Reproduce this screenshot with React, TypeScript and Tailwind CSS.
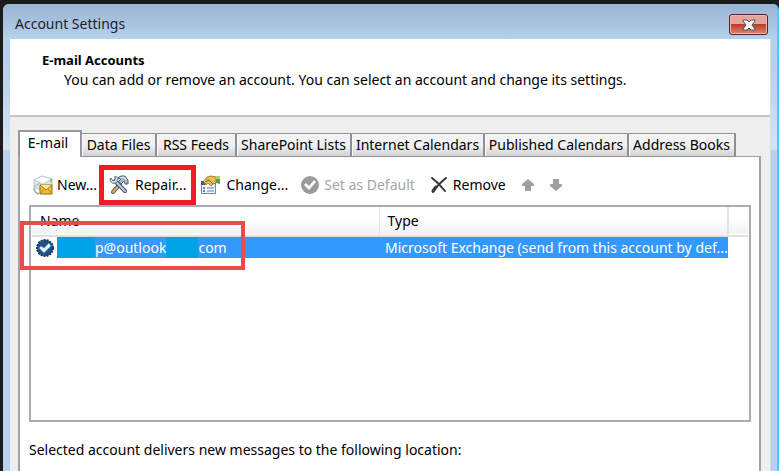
import React, { useState } from 'react';

const tabs = [
  { label: 'Data Files', width: 'w-[75px]' },
  { label: 'RSS Feeds', width: 'w-20' },
  { label: 'SharePoint Lists', width: 'w-[115px]' },
  { label: 'Internet Calendars', width: 'w-[133px]' },
  { label: 'Published Calendars', width: 'w-36' },
  { label: 'Address Books', width: 'w-[107px]' },
];

const NewIcon = () => (
  <svg className="h-5 w-5 shrink-0" viewBox="0 0 20 20">
    <path d="M1 5 9 1l10 3v7l-9 5-9-4z" fill="#dfe4e9" stroke="#b9c1c9" />
    <path d="m1 5 9 4 9-5-10-3z" fill="#fbfcfd" stroke="#b9c1c9" strokeWidth=".8" />
    <path d="m1 12 6-4" stroke="#a9b4be" />
    <path d="M1 13c0 4 2 5 5 6" stroke="#9cb5cd" strokeWidth="2" fill="none" />
    <path d="M17 4h2v3h-2z" fill="#4fe04f" />
    <path d="M7 10h12v9H7z" fill="#edc038" stroke="#8d6a1a" />
    <path d="m7 10 6 5 6-5" fill="#ffe991" stroke="#a67b17" />
    <path d="m7 19 4-5m8 5-4-5" stroke="#b88c22" />
  </svg>
);

const RepairIcon = () => (
  <svg className="h-5 w-5 shrink-0" viewBox="0 0 20 20">
    <path d="m11 9-7 8" stroke="#5f4632" strokeWidth="4" strokeLinecap="round" />
    <path d="m11 9-7 8" stroke="#dcb27c" strokeWidth="2" strokeLinecap="round" />
    <path d="m6 6 10 10" stroke="#3f5268" strokeWidth="4" strokeLinecap="round" />
    <path d="m6 6 10 10" stroke="#bfcedc" strokeWidth="2" strokeLinecap="round" />
    <path d="M1 4c0 4 4 6 7 3 2-2 1-5-2-6v4L4 6 2 3z" fill="#c9d5e1" stroke="#5a6f86" />
    <path d="m9 3 3-2h4l2 3 1 1v4h-3l-1-3-3 3-3-2 3-3z" fill="#a5b6c8" stroke="#4c6078" />
    <path d="m11 3 4-1 2 3" stroke="#e7eef5" fill="none" />
  </svg>
);

const ChangeIcon = () => (
  <svg className="h-5 w-5 shrink-0" viewBox="0 0 20 20">
    <path d="M1.5 6.500h14v12h-14z" fill="#f1f6fc" stroke="#7088a8" />
    <path d="M1 6h4v4H1z" fill="#315c91" />
    <path d="M3 13h2M3 16h2" stroke="#315c91" strokeWidth="1.500" />
    <path d="M7 13h7M7 16h7" stroke="#8fabd0" strokeWidth="1.500" />
    <path d="m3 7 4-5 4-1 5 1v6l-3 1-2 2-3-3-2 2-1-2z" fill="#e8bd55" stroke="#99701f" strokeWidth=".8" />
    <path d="m7 5 3 1 3 3M5 7l4-2" stroke="#8d641b" fill="none" />
    <path d="M16 1h4v8l-4-1z" fill="#5d9b52" />
    <path d="M16 1h4v3h-4z" fill="#b8cf55" />
  </svg>
);

const DefaultIcon = () => (
  <svg className="h-5 w-5 shrink-0" viewBox="0 0 20 20">
    <circle cx="10" cy="10" r="9" fill="#9b9b9b" />
    <path d="m4 10 5 5 7-8-2-2-5 6-3-3z" fill="#fff" />
  </svg>
);

const AccountIcon = () => (
  <svg className="h-5 w-5 shrink-0" viewBox="0 0 20 20">
    <circle cx="10" cy="10" r="8" fill="#1f5288" />
    <circle cx="10" cy="10" r="8" fill="none" stroke="#143a66" strokeWidth="2" strokeDasharray="2 1" />
    <path d="m4 10 5 5 7-7-2-3-5 5-3-2z" fill="#e9f3fd" stroke="#4f8fd0" strokeWidth=".8" />
  </svg>
);

const RemoveIcon = () => (
  <svg className="h-4 w-4 shrink-0" viewBox="0 0 16 16" fill="none" stroke="#333538" strokeLinecap="round">
    <path d="M1 1c4 3 9 8 13 13" strokeWidth="2" />
    <path d="M15 1C10 5 5 10 2 15" strokeWidth="2" />
    <path d="m2 14 3-4" strokeWidth="3" />
  </svg>
);

const ArrowIcon = ({ down }: { down?: boolean }) => (
  <svg className={down ? 'h-3 w-3 rotate-180' : 'h-3 w-3'} viewBox="0 0 12 12">
    <path d="M6 0 12 5v2H9v5H3V7H0V5z" fill="#a0a0a0" />
  </svg>
);

export default function App() {
  const [active, setActive] = useState('E-mail');

  return (
    <div className="flex min-h-screen flex-col bg-[#1c1c1c] pl-[3px] pt-1 font-['Noto_Sans',sans-serif] text-sm leading-5 text-black">
      <div className="flex flex-1 flex-col rounded-t-md border-r-2 border-[#3fd0f5] bg-[#b9d1ea] bg-[linear-gradient(to_bottom,#99b4d1_0px,#b7d0eb_35px,#b9d1ea_70px,#d6e4f3_145px,#b9d1ea_147px)]">
        <header className="flex h-[35px] shrink-0 items-start justify-between pl-3 pr-[9px] pt-[10px]">
          <h1 className="text-[#1a2330]">Account Settings</h1>
          <button
            aria-label="Close"
            className="flex h-[21px] w-[39px] items-center justify-center rounded-[3px] border border-[#5b1f2b] bg-linear-to-b from-[#e5a59b] from-45% via-[#b83c25] via-50% to-[#d88773] shadow-[inset_0_0_0_1px_#efb9ae]"
          >
            <svg className="h-3 w-4" viewBox="0 0 16 12">
              <path d="M2 1h4l2 2 2-2h4v1l-3 4 3 4v1h-4L8 9l-2 2H2v-1l3-4-3-4z" fill="#f5f5f5" stroke="#505663" />
            </svg>
          </button>
        </header>

        <main className="ml-[7px] mr-1.5 flex flex-1 flex-col border-r border-[#cfdff0] bg-[#efefef]">
          <section className="h-[78px] border-b-2 border-[#c4c4c4] bg-white pl-8 pt-[11px]">
            <h2 className="text-[13px] font-bold leading-5">E-mail Accounts</h2>
            <p className="whitespace-nowrap pl-[22px]">
              You can add or remove an account. You can select an account and change its settings.
            </p>
          </section>

          <div className="flex flex-1 flex-col pl-2 pr-[9px] pt-[13px]">
            <div role="tablist" className="relative -mb-px flex items-end">
              <button
                role="tab"
                aria-selected={active === 'E-mail'}
                onClick={() => setActive('E-mail')}
                className="h-[27px] w-16 border-2 border-b-0 border-[#9597a1] bg-white pb-1 pr-1"
              >
                E-mail
              </button>
              {tabs.map((tab) => (
                <button
                  key={tab.label}
                  role="tab"
                  aria-selected={active === tab.label}
                  onClick={() => setActive(tab.label)}
                  className={`${tab.width} h-6 whitespace-nowrap border-y border-r-2 border-[#8e9099] bg-linear-to-b from-[#f2f2f2] from-50% to-[#d2d2d2] shadow-[inset_1px_1px_0_#fafafa]`}
                >
                  {tab.label}
                </button>
              ))}
            </div>

            <div className="flex-1 border-x-2 border-t border-[#a0a1a9] bg-white pl-[9px] pr-2">
              <div className="flex h-12 items-center pl-1 pt-2">
                <button className="flex h-6 items-center gap-1 whitespace-nowrap">
                  <NewIcon />
                  New...
                </button>
                <button className="relative ml-3 flex h-6 items-center gap-1.5 whitespace-nowrap">
                  <RepairIcon />
                  Repair...
                  <span className="pointer-events-none absolute -inset-x-2.5 -inset-y-2 border-5 border-[#ee1c25]" />
                </button>
                <button className="ml-3.5 flex h-6 items-center gap-1.5 whitespace-nowrap">
                  <ChangeIcon />
                  Change...
                </button>
                <button disabled className="ml-3 flex h-6 items-center gap-1 whitespace-nowrap text-[#a6a6a6]">
                  <DefaultIcon />
                  Set as Default
                </button>
                <button className="ml-4 flex h-6 items-center gap-1.5 whitespace-nowrap">
                  <RemoveIcon />
                  Remove
                </button>
                <button disabled aria-label="Move up" className="ml-4">
                  <ArrowIcon />
                </button>
                <button disabled aria-label="Move down" className="ml-4">
                  <ArrowIcon down />
                </button>
              </div>

              <div className="relative h-[217px] border-2 border-[#a9adb3] bg-white px-px">
                <table className="w-full table-fixed border-collapse text-left">
                  <colgroup>
                    <col />
                    <col className="w-[349px]" />
                    <col className="w-5" />
                  </colgroup>
                  <thead>
                    <tr className="h-[29px] border-b-2 border-[#dedfe0] bg-linear-to-b from-white from-40% to-[#f1f2f4]">
                      <th className="border-r border-[#e3e4e6] py-0 pl-2 font-normal">Name</th>
                      <th className="border-r-2 border-[#e3e4e6] py-0 pl-2 font-normal">Type</th>
                      <th aria-label="Spacer" />
                    </tr>
                  </thead>
                  <tbody>
                    <tr className="h-[21px] text-white">
                      <td className="p-0">
                        <div className="flex h-[21px] items-center">
                          <span className="flex w-[25px] justify-center">
                            <AccountIcon />
                          </span>
                          <span className="flex h-full flex-1 items-center bg-[#3399ff]">
                            <span className="h-full w-[38px] bg-[#00a2e8]" />
                            p@outlook
                            <span className="h-full w-8 bg-[#00a2e8]" />
                            com
                          </span>
                        </div>
                      </td>
                      <td className="whitespace-nowrap bg-[#3399ff] py-0 pl-1.5 pr-0">
                        Microsoft Exchange (send from this account by def...
                      </td>
                      <td />
                    </tr>
                  </tbody>
                </table>
                <span className="pointer-events-none absolute -left-[11px] top-[14px] h-[49px] w-[225px] border-4 border-[#e94b47]" />
              </div>

              <p className="pt-[18px]">Selected account delivers new messages to the following location:</p>
            </div>
          </div>
        </main>
      </div>
    </div>
  );
}
